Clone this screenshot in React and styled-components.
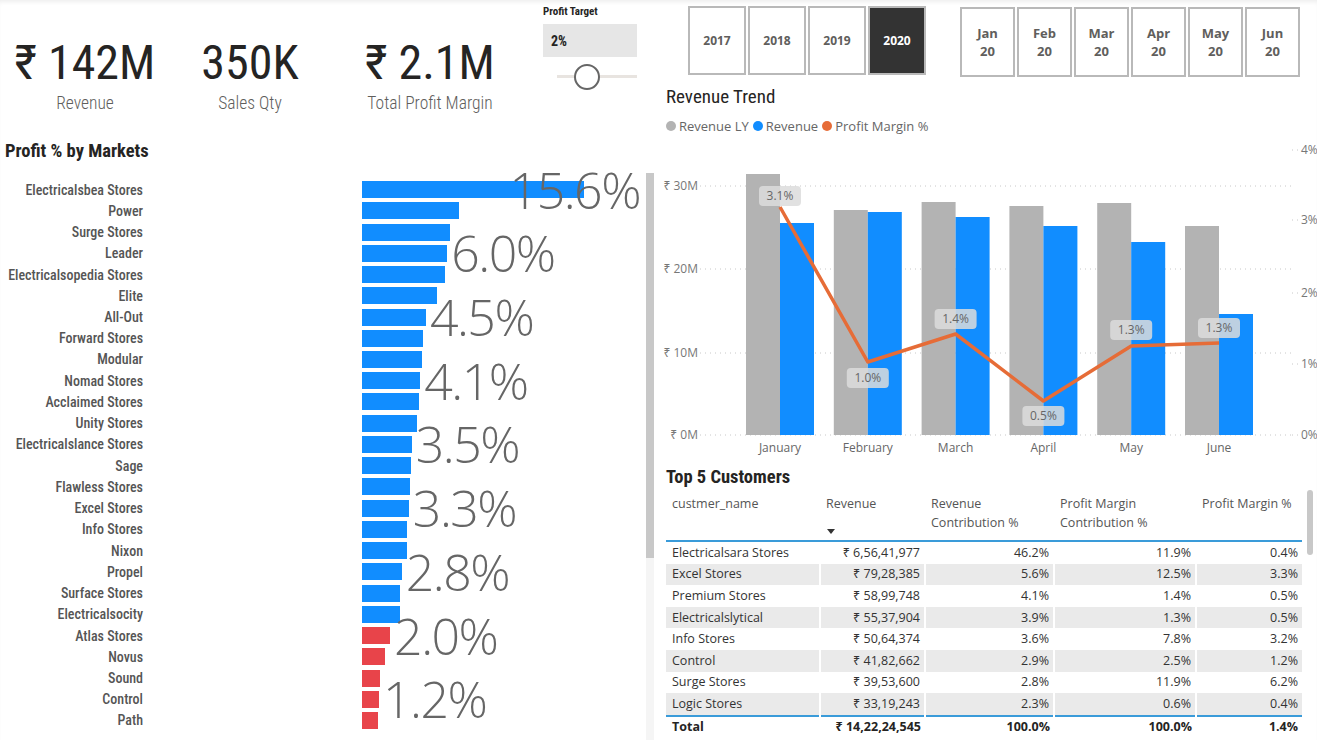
import styled, { createGlobalStyle } from "styled-components"

const DIN = `"Liberation Sans Narrow", "Roboto Condensed", "DejaVu Sans Condensed", Roboto, sans-serif`
const SEGOE = `"Open Sans", "Noto Sans", sans-serif`

const GlobalStyle = createGlobalStyle`
  html, body {
    margin: 0;
    padding: 0;
    background: #fff;
    overflow: hidden;
  }
  body {
    font-family: ${SEGOE};
    color: #333;
  }
`

const markets = [
  ["Electricalsbea Stores", 15.6, "15.6%"],
  ["Power", 6.8],
  ["Surge Stores", 6.2],
  ["Leader", 6.0, "6.0%"],
  ["Electricalsopedia Stores", 5.85],
  ["Elite", 5.3],
  ["All-Out", 4.5, "4.5%"],
  ["Forward Stores", 4.3],
  ["Modular", 4.2],
  ["Nomad Stores", 4.1, "4.1%"],
  ["Acclaimed Stores", 4.0],
  ["Unity Stores", 3.9],
  ["Electricalslance Stores", 3.5, "3.5%"],
  ["Sage", 3.45],
  ["Flawless Stores", 3.35],
  ["Excel Stores", 3.3, "3.3%"],
  ["Info Stores", 3.2],
  ["Nixon", 3.2],
  ["Propel", 2.8, "2.8%"],
  ["Surface Stores", 2.7],
  ["Electricalsocity", 2.7],
  ["Atlas Stores", 1.98, "2.0%"],
  ["Novus", 1.6],
  ["Sound", 1.25],
  ["Control", 1.2, "1.2%"],
  ["Path", 1.1],
]

const customers = [
  ["Electricalsara Stores", "₹ 6,56,41,977", "46.2%", "11.9%", "0.4%"],
  ["Excel Stores", "₹ 79,28,385", "5.6%", "12.5%", "3.3%"],
  ["Premium Stores", "₹ 58,99,748", "4.1%", "1.4%", "0.5%"],
  ["Electricalslytical", "₹ 55,37,904", "3.9%", "1.3%", "0.5%"],
  ["Info Stores", "₹ 50,64,374", "3.6%", "7.8%", "3.2%"],
  ["Control", "₹ 41,82,662", "2.9%", "2.5%", "1.2%"],
  ["Surge Stores", "₹ 39,53,600", "2.8%", "11.9%", "6.2%"],
  ["Logic Stores", "₹ 33,19,243", "2.3%", "0.6%", "0.4%"],
]

// pixel tops (page coords) of bars, line points and label boxes
const months = [
  { name: "January", ly: 174, rev: 223, pm: 207, pmLabel: "3.1%", tag: 196 },
  { name: "February", ly: 210, rev: 212, pm: 362, pmLabel: "1.0%", tag: 378 },
  { name: "March", ly: 202, rev: 217, pm: 334, pmLabel: "1.4%", tag: 319 },
  { name: "April", ly: 206, rev: 226, pm: 401, pmLabel: "0.5%", tag: 416 },
  { name: "May", ly: 203, rev: 242, pm: 346, pmLabel: "1.3%", tag: 330 },
  { name: "June", ly: 226, rev: 314, pm: 343, pmLabel: "1.3%", tag: 328 },
]

function RevenueChart() {
  // chart coordinates are page coords shifted by (660, 140)
  const ox = 660
  const oy = 140
  const base = 435 - oy
  const centers = months.map((m, i) => 780 + i * 87.8 - ox)
  const linePts = months.map((m, i) => `${centers[i]},${m.pm - oy}`).join(" ")
  const leftTicks = [["₹ 30M", 186], ["₹ 20M", 269], ["₹ 10M", 353], ["₹ 0M", 435]]
  const rightTicks = [["4%", 150], ["3%", 220], ["2%", 293], ["1%", 364], ["0%", 435]]

  return (
    <ChartSvg width="657" height="322" viewBox="0 0 657 322">
      {leftTicks.map(([t, y]) => (
        <g key={t}>
          <line x1="40" x2="632" y1={y - oy} y2={y - oy} stroke="#c8c8c8" strokeDasharray="1 4" />
          <text x="38" y={y - oy + 4} textAnchor="end" fontSize="12" fill="#777">{t}</text>
        </g>
      ))}
      {rightTicks.map(([t, y]) => (
        <g key={t}>
          <line x1="632" x2="640" y1={y - oy} y2={y - oy} stroke="#c8c8c8" strokeDasharray="1 4" />
          <text x="641" y={y - oy + 4} fontSize="12" fill="#777">{t}</text>
        </g>
      ))}
      {months.map((m, i) => (
        <g key={m.name}>
          <rect x={centers[i] - 34} y={m.ly - oy} width="34" height={base - (m.ly - oy)} fill="#b3b3b3" />
          <rect x={centers[i]} y={m.rev - oy} width="34" height={base - (m.rev - oy)} fill="#118dff" />
          <text x={centers[i]} y={448 - oy + 4} textAnchor="middle" fontSize="12" fill="#666">{m.name}</text>
        </g>
      ))}
      <polyline points={linePts} fill="none" stroke="#e66c37" strokeWidth="3.5" strokeLinejoin="round" />
      {months.map((m, i) => (
        <g key={m.name + "l"}>
          <rect x={centers[i] - 21} y={m.tag - oy - 10} width="42" height="20" rx="4" fill="#dcdcdc" fillOpacity="0.85" />
          <text x={centers[i]} y={m.tag - oy + 4} textAnchor="middle" fontSize="12" fill="#666">{m.pmLabel}</text>
        </g>
      ))}
    </ChartSvg>
  )
}

function App() {
  return (
    <>
      <GlobalStyle />
      <Page>
        <LeftCol>
          <TopArea>
            <Kpi $w={170}>
              <KpiValue>₹ 142M</KpiValue>
              <KpiLabel>Revenue</KpiLabel>
            </Kpi>
            <Kpi $w={160}>
              <KpiValue>350K</KpiValue>
              <KpiLabel>Sales Qty</KpiLabel>
            </Kpi>
            <Kpi $w={200}>
              <KpiValue>₹ 2.1M</KpiValue>
              <KpiLabel>Total Profit Margin</KpiLabel>
            </Kpi>
            <Target>
              <TargetTitle>Profit Target</TargetTitle>
              <TargetBox>2%</TargetBox>
              <Slider>
                <SliderThumb />
              </Slider>
            </Target>
          </TopArea>

          <SectionTitle>Profit % by Markets</SectionTitle>

          <MarketPanel>
            <MarketRows>
              {markets.map(([name, pct, label]) => (
                <MarketRow key={name}>
                  <MarketName>{name}</MarketName>
                  <BarTrack>
                    <Bar $low={pct < 2} style={{ width: pct * 14.2 }} />
                    {label && (
                      <BigValue
                        $clamp={pct > 10}
                        style={pct > 10 ? undefined : { left: pct * 14.2 + 4 }}
                      >
                        {label}
                      </BigValue>
                    )}
                  </BarTrack>
                </MarketRow>
              ))}
            </MarketRows>
            <ScrollTrack>
              <ScrollThumb />
            </ScrollTrack>
          </MarketPanel>
        </LeftCol>

        <RightCol>
          <Slicers>
            <YearGroup>
              {["2017", "2018", "2019", "2020"].map((y) => (
                <YearBtn key={y} $active={y === "2020"}>{y}</YearBtn>
              ))}
            </YearGroup>
            <MonthGroup>
              {["Jan", "Feb", "Mar", "Apr", "May", "Jun"].map((m) => (
                <MonthBtn key={m}>
                  {m}
                  <br />
                  20
                </MonthBtn>
              ))}
            </MonthGroup>
          </Slicers>

          <ChartTitle>Revenue Trend</ChartTitle>
          <Legend>
            <LegendItem $c="#b3b3b3">Revenue LY</LegendItem>
            <LegendItem $c="#118dff">Revenue</LegendItem>
            <LegendItem $c="#e66c37">Profit Margin %</LegendItem>
          </Legend>

          <RevenueChart />

          <TableTitle>Top 5 Customers</TableTitle>
          <TableWrap>
            <Table>
              <colgroup>
                <col style={{ width: 154 }} />
                <col style={{ width: 105 }} />
                <col style={{ width: 129 }} />
                <col style={{ width: 142 }} />
                <col style={{ width: 106 }} />
              </colgroup>
              <thead>
                <tr>
                  <Th>custmer_name</Th>
                  <Th>
                    Revenue
                    <SortArrow />
                  </Th>
                  <Th>Revenue<br />Contribution %</Th>
                  <Th>Profit Margin<br />Contribution %</Th>
                  <Th>Profit Margin %</Th>
                </tr>
              </thead>
              <tbody>
                {customers.map((r, i) => (
                  <Tr key={r[0]} $shade={i % 2 === 1}>
                    <Td>{r[0]}</Td>
                    <Td $num>{r[1]}</Td>
                    <Td $num>{r[2]}</Td>
                    <Td $num>{r[3]}</Td>
                    <Td $num>{r[4]}</Td>
                  </Tr>
                ))}
              </tbody>
              <tfoot>
                <tr>
                  <Tf>Total</Tf>
                  <Tf $num>₹ 14,22,24,545</Tf>
                  <Tf $num>100.0%</Tf>
                  <Tf $num>100.0%</Tf>
                  <Tf $num>1.4%</Tf>
                </tr>
              </tfoot>
            </Table>
            <TableScroll />
          </TableWrap>
        </RightCol>
      </Page>
    </>
  )
}

export default App

const Page = styled.div`
  width: 1317px;
  height: 740px;
  display: flex;
  box-shadow: inset 0 4px 4px -2px rgba(0, 0, 0, 0.07);
  overflow: hidden;
`

const LeftCol = styled.div`
  width: 660px;
  flex-shrink: 0;
  display: flex;
  flex-direction: column;
`

const TopArea = styled.div`
  display: flex;
  height: 136px;
  flex-shrink: 0;
`

const Kpi = styled.div`
  width: ${(p) => p.$w}px;
  display: flex;
  flex-direction: column;
  align-items: center;
  padding-top: 38px;
`

const KpiValue = styled.div`
  font-family: ${DIN};
  font-size: 48px;
  line-height: 50px;
  color: #252423;
  white-space: nowrap;
`

const KpiLabel = styled.div`
  font-family: ${DIN};
  font-weight: 300;
  font-size: 17.5px;
  color: #605e5c;
  margin-top: 5px;
  white-space: nowrap;
`

const Target = styled.div`
  margin-left: 13px;
  padding-top: 5px;
  width: 94px;
`

const TargetTitle = styled.div`
  font-family: ${DIN};
  font-weight: 700;
  font-size: 11px;
  color: #252423;
  height: 19px;
`

const TargetBox = styled.div`
  height: 33px;
  background: #e6e6e6;
  font-family: ${DIN};
  font-weight: 700;
  font-size: 14px;
  color: #252423;
  display: flex;
  align-items: center;
  padding-left: 8px;
`

const Slider = styled.div`
  position: relative;
  margin: 18px 0 0 14px;
  height: 3px;
  background: #e8e4e0;
`

const SliderThumb = styled.div`
  position: absolute;
  left: 17px;
  top: -11px;
  width: 22px;
  height: 22px;
  border: 2px solid #666;
  border-radius: 50%;
  background: #fff;
`

const SectionTitle = styled.div`
  font-family: ${DIN};
  font-weight: 700;
  font-size: 18.5px;
  color: #252423;
  padding: 4px 0 0 5px;
  height: 33px;
  flex-shrink: 0;
`

const MarketPanel = styled.div`
  display: flex;
  flex: 1;
`

const MarketRows = styled.div`
  width: 646px;
  padding-top: 6px;
`

const MarketRow = styled.div`
  display: flex;
  align-items: center;
  height: 21.24px;
`

const MarketName = styled.div`
  width: 143px;
  text-align: right;
  font-family: ${DIN};
  font-weight: 500;
  font-size: 14px;
  color: #555;
  white-space: nowrap;
`

const BarTrack = styled.div`
  position: relative;
  margin-left: 219px;
  flex: 1;
  height: 100%;
  display: flex;
  align-items: center;
`

const Bar = styled.div`
  height: 17px;
  background: ${(p) => (p.$low ? "#e8444a" : "#118dff")};
`

const BigValue = styled.div`
  position: absolute;
  top: 50%;
  transform: translateY(-50%);
  ${(p) => (p.$clamp ? "right: 6px;" : "")}
  font-family: ${SEGOE};
  font-weight: 300;
  font-size: 50px;
  letter-spacing: -1.5px;
  color: #666;
  white-space: nowrap;
  line-height: 1;
`

const ScrollTrack = styled.div`
  width: 8px;
  background: #f5f5f5;
`

const ScrollThumb = styled.div`
  height: 385px;
  background: #c8c8c8;
`

const RightCol = styled.div`
  width: 657px;
  flex-shrink: 0;
  display: flex;
  flex-direction: column;
  & > * {
    flex-shrink: 0;
  }
`

const Slicers = styled.div`
  display: flex;
  padding: 6px 0 0 28px;
  gap: 34px;
`

const YearGroup = styled.div`
  display: flex;
  gap: 2px;
`

const YearBtn = styled.div`
  width: 58px;
  height: 69px;
  box-sizing: border-box;
  border: 2px solid #b9b9b9;
  background: ${(p) => (p.$active ? "#333" : "#fff")};
  color: ${(p) => (p.$active ? "#fff" : "#605e5c")};
  font-family: ${SEGOE};
  font-weight: 700;
  font-size: 12px;
  display: flex;
  align-items: center;
  justify-content: center;
`

const MonthGroup = styled.div`
  display: flex;
  gap: 2px;
  margin-top: 1px;
`

const MonthBtn = styled.div`
  width: 55px;
  height: 70px;
  box-sizing: border-box;
  border: 2px solid #b9b9b9;
  color: #605e5c;
  font-family: ${SEGOE};
  font-weight: 700;
  font-size: 13px;
  line-height: 18px;
  text-align: center;
  display: flex;
  align-items: center;
  justify-content: center;
`

const ChartTitle = styled.div`
  font-family: ${DIN};
  font-size: 19px;
  color: #252423;
  padding: 8px 0 0 6px;
  height: 25px;
`

const Legend = styled.div`
  display: flex;
  gap: 4px;
  padding: 6px 0 0 6px;
  height: 24px;
`

const LegendItem = styled.div`
  display: flex;
  align-items: center;
  height: 20px;
  font-family: ${SEGOE};
  font-size: 13px;
  color: #666;

  &::before {
    content: "";
    width: 10px;
    height: 10px;
    border-radius: 50%;
    background: ${(p) => p.$c};
    margin-right: 3px;
  }
`

const ChartSvg = styled.svg`
  display: block;
  font-family: ${SEGOE};
`

const TableTitle = styled.div`
  font-family: ${DIN};
  font-weight: 700;
  font-size: 18.5px;
  color: #252423;
  padding: 4px 0 0 6px;
  height: 24px;
`

const TableWrap = styled.div`
  display: flex;
  padding-left: 6px;
`

const Table = styled.table`
  width: 636px;
  table-layout: fixed;
  border-collapse: collapse;
  font-family: ${SEGOE};
  font-size: 12.5px;
  line-height: 16px;
`

const Th = styled.th`
  position: relative;
  height: 46px;
  vertical-align: top;
  text-align: left;
  font-weight: 400;
  color: #555;
  padding: 4px 6px 0;
  line-height: 19px;
  border-bottom: 2px solid #3a9bd9;
`

const SortArrow = styled.div`
  position: absolute;
  left: 7px;
  bottom: 6px;
  width: 0;
  height: 0;
  border-left: 4px solid transparent;
  border-right: 4px solid transparent;
  border-top: 5px solid #333;
`

const Tr = styled.tr`
  background: ${(p) => (p.$shade ? "#eaeaea" : "#fff")};
`

const Td = styled.td`
  height: 21.6px;
  padding: 0 ${(p) => (p.$num ? "4px" : "6px")};
  text-align: ${(p) => (p.$num ? "right" : "left")};
  color: #333;
  white-space: nowrap;
  border-right: 2px solid #fff;
  &:last-child {
    border-right: none;
  }
`

const Tf = styled.td`
  height: 20px;
  line-height: 20px;
  padding: 0 ${(p) => (p.$num ? "4px" : "6px")};
  text-align: ${(p) => (p.$num ? "right" : "left")};
  font-weight: 700;
  color: #252423;
  white-space: nowrap;
  border-top: 2px solid #3a9bd9;
`

const TableScroll = styled.div`
  width: 6px;
  height: 65px;
  margin-left: 5px;
  border-radius: 3px;
  background: #c8c8c8;
`
